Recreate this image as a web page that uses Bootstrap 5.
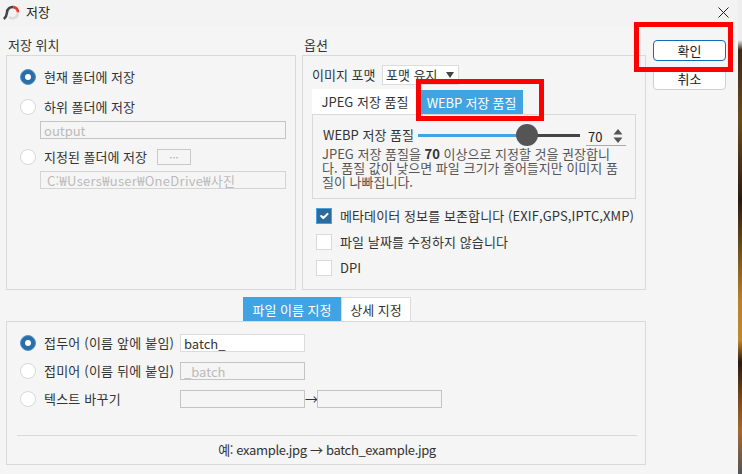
<!DOCTYPE html>
<html lang="ko">
<head>
  <meta charset="UTF-8">
  <meta name="viewport" content="width=device-width, initial-scale=1.0">
  <title>저장</title>
  <link href="https://cdn.jsdelivr.net/npm/bootstrap@5.3.3/dist/css/bootstrap.min.css" rel="stylesheet">
  <style>
    html, body { height: 100%; }
    body {
      margin: 0;
      overflow: hidden;
      font-family: "Noto Sans CJK KR", "Liberation Sans", sans-serif;
      font-size: 13px;
      line-height: 16px;
      color: #333;
      background: linear-gradient(180deg, #eee 0, #eee 40px, #3a2a18 50px, #6a4a20 120px, #2a1c10 200px, #b5812c 300px, #c08a2a 340px, #2a1a10 362px, #7a4a20 400px, #a06a30 430px, #555 474px);
    }

    .app-window {
      width: 738px;
      height: 474px;
      background: #f5f5f5;
      border-top-right-radius: 8px;
      position: relative;
    }

    .title-bar { height: 26px; padding-left: 3px; background: #f3f3f3; gap: 6px; color: #222; }
    .title-bar svg:first-child { margin-top: -2px; }
    .title-bar span { margin-top: -2px; }
    .close-btn { margin-left: auto; margin-right: 9px; padding: 0; border: 0; background: none; line-height: 0; }

    .main-col { width: 646px; padding: 9px 0 0 6px; flex: none; }
    .side-col { padding: 14px 0 0 7px; gap: 7px; width: 80px; }
    .side-btn {
      width: 73px;
      height: 22px;
      padding: 0;
      font-size: 13px;
      line-height: 18px;
      color: #222;
      background: #fff;
      border: 1px solid #d0d0d0;
      border-radius: 4px;
    }
    .side-btn.is-default { border-color: #0f6cbd; height: 21px; }

    .group-left { width: 290px; }
    .group-right { width: 344px; margin-left: 6px; }
    .group-title { height: 20px; padding-left: 2px; line-height: 20px; color: #333; }
    .group-box { height: 235px; border: 1px solid #d9d9d9; }
    .group-left .group-box { padding: 13px 9px 0 13px; }
    .group-right .group-box { padding: 9px 9px 0 9px; }

    .opt-row { height: 16px; gap: 8px; }
    .opt-row span { margin-top: -1px; }
    .opt-row.is-next { margin-top: 14px; }
    .opt-row.is-third { margin-top: 10px; }
    .opt-row .form-check-input, .opt-grid .form-check-input {
      flex: none;
      width: 16px;
      height: 16px;
      margin: 0;
      background-color: #fff;
      border: 1px solid #d9d9d9;
      opacity: 1;
    }
    .form-check-input:checked[type=radio] {
      background-color: #2a6ea5;
      border-color: #4f97d3;
      background-size: 12px;
      background-position: center;
    }
    .form-check-input:checked[type=checkbox] {
      background-color: #2f6a9c;
      border-color: #42a3e3;
      border-radius: 0;
    }
    .form-check-input[type=checkbox] { border-radius: 0; }

    .field-box {
      height: 18px;
      padding: 0 3px;
      font-size: 13px;
      line-height: 14px;
      border-radius: 0;
      background: #f5f5f5;
      border: 1px solid #c4c4c4;
      color: #bbb;
    }
    .field-box:disabled { background: #f5f5f5; color: #bbb; opacity: 1; }
    .field-box.is-live { background: #fff; border-color: #dcdcdc; color: #333; }
    .field-box.is-pale { border-color: #d4d4d4; padding-left: 6px; letter-spacing: 0.3px; }
    .sub-field { width: 246px; margin: 6px 0 0 20px; }
    .dots-btn { width: 34px; height: 16px; padding: 0; line-height: 10px; font-size: 11px; color: #aaa; background: #f5f5f5; border: 1px solid #c8c8c8; border-radius: 0; margin-left: 2px; }

    .format-row { height: 20px; }
    .format-row span { width: 70px; flex: none; }
    .format-select {
      width: 77px;
      height: 20px;
      padding: 0 0 0 3px;
      font-size: 13px;
      line-height: 18px;
      color: #333;
      border: 1px solid #dcdcdc;
      border-radius: 0;
      background-color: #fff;
      background-image: url("data:image/svg+xml,%3csvg xmlns='http://www.w3.org/2000/svg' viewBox='0 0 8 6'%3e%3cpath fill='%23444' d='M0 0h8L4 6z'/%3e%3c/svg%3e");
      background-position: right 4px center;
      background-size: 8px 6px;
    }

    .tab-strip { gap: 2px; }
    .tab-item {
      height: 25px;
      line-height: 23px;
      text-align: center;
      background: #fff;
      color: #333;
      padding: 0;
      border: 0;
      border-radius: 0;
    }
    .tab-item.is-on { background: #42a3e3; color: #fff; }
    .quality-tabs { margin: 4px 0 0; }
    .quality-tabs .tab-item:first-child { width: 106px; }
    .quality-tabs .tab-item.is-on { width: 103px; height: 24px; margin-top: 1px; letter-spacing: -0.15px; }

    .quality-pane { width: 324px; height: 85px; padding: 9px 9px 0 9px; border: 1px solid #d9d9d9; }
    .slider-row { height: 22px; }
    .slider-label { width: 96px; flex: none; padding-left: 1px; color: #333; }
    .quality-range { width: 162px; height: 22px; flex: none; display: block; }
    .quality-range::-webkit-slider-runnable-track {
      height: 3px;
      border-radius: 0;
      background: linear-gradient(90deg, #42a3e3 0, #42a3e3 66%, #444 66%, #444 100%);
    }
    .quality-range::-webkit-slider-thumb {
      width: 22px;
      height: 22px;
      margin-top: -9.5px;
      background: #555;
      border: 0;
      border-radius: 50%;
      box-shadow: none;
    }
    .spin-box { width: 40px; height: 18px; margin: 3px 0 0 6px; padding-left: 2px; line-height: 15px; border-bottom: 1px solid #aaa; color: #222; }
    .spin-box svg { margin: 0 3px 0 auto; }
    .quality-note { margin: 1px 0 0; line-height: 14px; color: #555; white-space: nowrap; }
    .quality-note b { color: #333; }

    .check-list { margin: 9px 0 0 4px; gap: 10px; letter-spacing: 0.1px; }

    .name-tabs { margin: 7px 0 0 237px; gap: 0; }
    .name-tabs .tab-item { height: 24px; line-height: 23px; }
    .name-tabs .tab-item.is-on { width: 98px; }
    .name-tabs .tab-item:last-child { width: 70px; border: 1px solid #dcdcdc; border-bottom: 0; }

    .name-box { width: 640px; height: 144px; border: 1px solid #d9d9d9; padding: 12px 9px 0 13px; }
    .opt-grid {
      display: grid;
      grid-template-columns: 16px 144px 125px 12px 125px;
      grid-auto-rows: 18px;
      row-gap: 10px;
      align-items: center;
    }
    .opt-grid label { padding-left: 8px; margin-top: -1px; white-space: nowrap; letter-spacing: 0.2px; }
    .opt-grid .field-box { width: 125px; }
    .arrow-mark { text-align: center; line-height: 16px; color: #333; }
    .name-rule { width: 620px; margin: 27px 0 0 -3px; border-top: 1px solid #d9d9d9; opacity: 1; }
    .name-sample { width: 620px; margin: 6px 0 0 -3px; text-align: center; color: #333; letter-spacing: -0.35px; }

    /* red annotation boxes drawn over the dialog */
    .mark-box { position: absolute; border: 5px solid #f00; pointer-events: none; }
    .mark-one { left: 634px; top: 22px; width: 99px; height: 50px; }
    .mark-two { left: 416px; top: 79px; width: 128px; height: 42px; }
  </style>
</head>
<body>
  <div class="app-window d-flex flex-column">
    <!-- Title -->
    <div class="title-bar d-flex align-items-center">
      <svg width="17" height="17" viewBox="0 0 17 17">
        <path d="M10.500 3.100A5.500 5.500 0 0 1 15 8.500" fill="none" stroke="#e8392f" stroke-width="2.6"/>
        <path d="M15 8.500A5.500 5.500 0 0 1 6 13" fill="none" stroke="#dcdcdc" stroke-width="2.6"/>
        <path d="M10.500 3.100A5.500 5.500 0 0 0 4 8.500C3.800 11 3 13 .8 15" fill="none" stroke="#444" stroke-width="2.6"/>
      </svg>
      <span>저장</span>
      <button type="button" class="close-btn" aria-label="닫기">
        <svg width="11" height="11" viewBox="0 0 11 11"><path d="M.5.5l10 10M10.500.5l-10 10" stroke="#222" stroke-width="1"/></svg>
      </button>
    </div>

    <div class="d-flex flex-grow-1">
      <div class="main-col">
        <div class="d-flex">
          <!-- Save location -->
          <div class="group-left">
            <div class="group-title">저장 위치</div>
            <div class="group-box">
              <div class="opt-row d-flex align-items-center">
                <input class="form-check-input" type="radio" name="where" checked>
                <span>현재 폴더에 저장</span>
              </div>
              <div class="opt-row is-next d-flex align-items-center">
                <input class="form-check-input" type="radio" name="where">
                <span>하위 폴더에 저장</span>
              </div>
              <input class="form-control field-box sub-field" value="output" disabled>
              <div class="opt-row is-third d-flex align-items-center">
                <input class="form-check-input" type="radio" name="where">
                <span>지정된 폴더에 저장</span>
                <button type="button" class="dots-btn" disabled>···</button>
              </div>
              <input class="form-control field-box is-pale sub-field" value="C:₩Users₩user₩OneDrive₩사진" disabled>
            </div>
          </div>

          <!-- Options -->
          <div class="group-right">
            <div class="group-title">옵션</div>
            <div class="group-box">
              <div class="format-row d-flex align-items-center">
                <span>이미지 포맷</span>
                <select class="form-select format-select"><option>포맷 유지</option></select>
              </div>
              <div class="tab-strip quality-tabs d-flex">
                <button type="button" class="tab-item">JPEG 저장 품질</button>
                <button type="button" class="tab-item is-on">WEBP 저장 품질</button>
              </div>
              <div class="quality-pane">
                <div class="slider-row d-flex align-items-center">
                  <span class="slider-label">WEBP 저장 품질</span>
                  <input type="range" class="form-range quality-range" min="0" max="100" value="70">
                  <div class="spin-box d-flex align-items-center">
                    <span>70</span>
                    <svg width="10" height="14" viewBox="0 0 10 14"><path fill="#555" d="M5 0l4.500 5.500H.5zM5 14L.5 8.500h9z"/></svg>
                  </div>
                </div>
                <p class="quality-note">JPEG 저장 품질을 <b>70</b> 이상으로 지정할 것을 권장합니<br>다. 품질 값이 낮으면 파일 크기가 줄어들지만 이미지 품<br>질이 나빠집니다.</p>
              </div>
              <div class="check-list d-flex flex-column">
                <div class="opt-row d-flex align-items-center">
                  <input class="form-check-input" type="checkbox" checked>
                  <span>메타데이터 정보를 보존합니다 (EXIF,GPS,IPTC,XMP)</span>
                </div>
                <div class="opt-row d-flex align-items-center">
                  <input class="form-check-input" type="checkbox">
                  <span>파일 날짜를 수정하지 않습니다</span>
                </div>
                <div class="opt-row d-flex align-items-center">
                  <input class="form-check-input" type="checkbox">
                  <span>DPI</span>
                </div>
              </div>
            </div>
          </div>
        </div>

        <!-- File naming -->
        <div class="name-tabs d-flex">
          <button type="button" class="tab-item is-on">파일 이름 지정</button>
          <button type="button" class="tab-item">상세 지정</button>
        </div>
        <div class="name-box">
          <div class="opt-grid">
            <input class="form-check-input" type="radio" name="naming" checked>
            <label>접두어 (이름 앞에 붙임)</label>
            <input class="form-control field-box is-live" value="batch_">
            <span></span><span></span>

            <input class="form-check-input" type="radio" name="naming">
            <label>접미어 (이름 뒤에 붙임)</label>
            <input class="form-control field-box" value="_batch" disabled>
            <span></span><span></span>

            <input class="form-check-input" type="radio" name="naming">
            <label>텍스트 바꾸기</label>
            <input class="form-control field-box" disabled>
            <span class="arrow-mark">→</span>
            <input class="form-control field-box" disabled>
          </div>
          <hr class="name-rule">
          <div class="name-sample">예: example.jpg → batch_example.jpg</div>
        </div>
      </div>

      <!-- Dialog buttons -->
      <div class="side-col d-flex flex-column">
        <button type="button" class="btn side-btn is-default">확인</button>
        <button type="button" class="btn side-btn">취소</button>
      </div>
    </div>

    <div class="mark-box mark-one"></div>
    <div class="mark-box mark-two"></div>
  </div>

  <script src="https://cdn.jsdelivr.net/npm/bootstrap@5.3.3/dist/js/bootstrap.bundle.min.js"></script>
</body>
</html>
